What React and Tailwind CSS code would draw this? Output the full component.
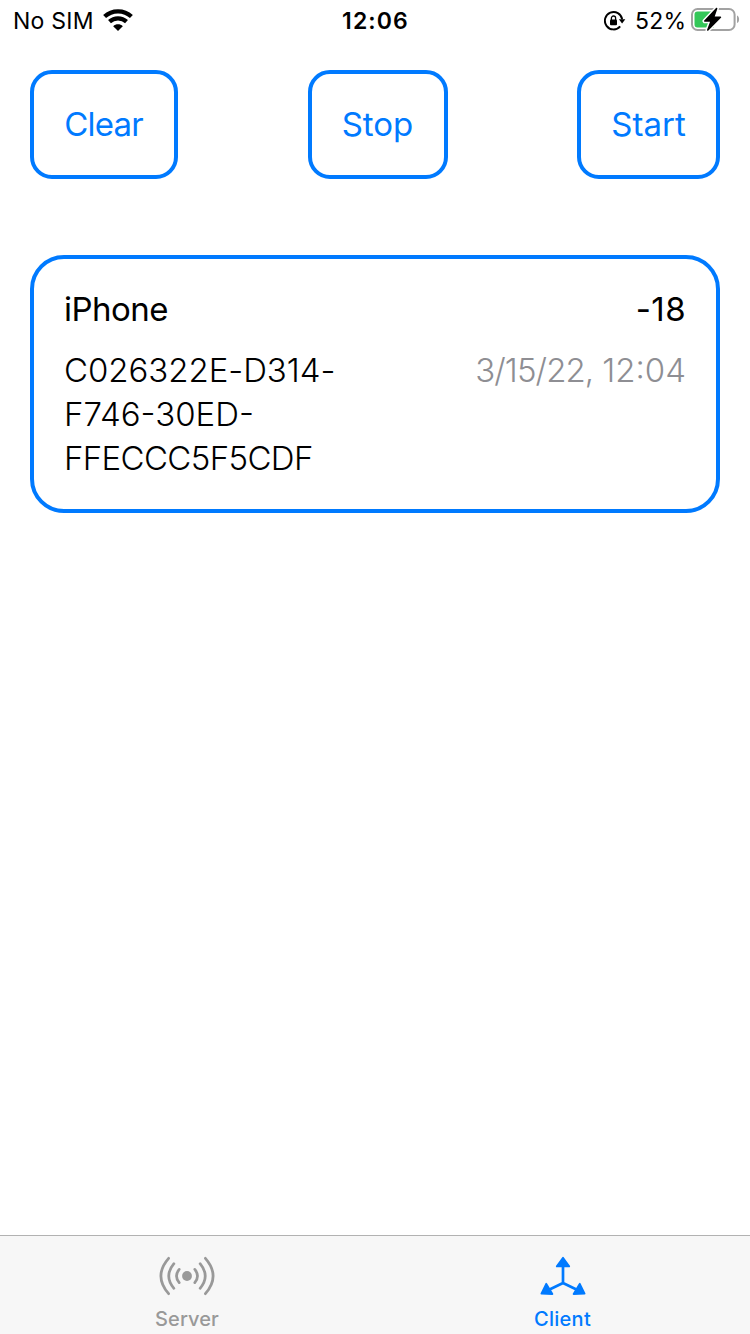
const Wifi = () => (
  <svg width="30" height="22" viewBox="0 0 30 22" fill="none" stroke="#000">
    <path d="M1.6 7.6C9 .5 21 .5 28.4 7.6" strokeWidth="4.2" />
    <path d="M6.5 12.6C11.2 8.2 18.8 8.2 23.5 12.6" strokeWidth="4.2" />
    <path d="M10.2 17.2C12.8 14.7 17.2 14.7 19.8 17.2L15 22Z" fill="#000" stroke="none" />
  </svg>
);

const RotationLock = () => (
  <svg width="22" height="20" viewBox="0 0 22 20" fill="none">
    <path d="M16.2 15.4A8.7 8.7 0 1 1 18.2 8.4" stroke="#000" strokeWidth="1.9" />
    <path d="M14.9 8.2H21.3L18.1 12.6Z" fill="#000" />
    <rect x="6" y="8.4" width="7" height="5.8" rx="1" fill="#000" />
    <path d="M7.4 9V7.1a2.1 2.1 0 0 1 4.2 0V9" stroke="#000" strokeWidth="1.3" />
  </svg>
);

const Battery = () => (
  <svg width="49" height="26" viewBox="0 0 49 26" fill="none">
    <rect x="1" y="3" width="42.6" height="21" rx="5.6" stroke="#a2a2a2" strokeWidth="2" />
    <path d="M46 9.5c2.8 1 2.8 6.6 0 7.6Z" fill="#a2a2a2" />
    <path d="M6.5 5.4H23V21.6H6.5a3 3 0 0 1-3-3V8.4a3 3 0 0 1 3-3Z" fill="#34c759" />
    <path
      d="M25.6 2.6 13.8 15H20.2L16.8 24 29.4 11.3H22.6Z"
      fill="#000"
      stroke="#fff"
      strokeWidth="4.6"
      strokeLinejoin="round"
    />
    <path d="M25.6 2.6 13.8 15H20.2L16.8 24 29.4 11.3H22.6Z" fill="#000" stroke="#000" strokeWidth="1.6" strokeLinejoin="round" />
  </svg>
);

const Broadcast = () => (
  <svg width="56" height="40" viewBox="0 0 56 40" fill="none" stroke="#999" strokeWidth="2.7" strokeLinecap="round">
    <circle cx="28" cy="20" r="4.9" fill="#999" stroke="none" />
    <path d="M20.2 13.4Q14.8 20 20.2 26.6M35.8 13.4Q41.2 20 35.8 26.6" />
    <path d="M14.9 7.7Q4.6 20 14.9 32.3M41.1 7.7Q51.4 20 41.1 32.3" />
    <path d="M9.6 2.3Q-5.8 20 9.6 37.7M46.4 2.3Q61.8 20 46.4 37.7" />
  </svg>
);

const Axes = () => (
  <svg width="46" height="40" viewBox="0 0 46 40" fill="#007aff" stroke="#007aff" strokeLinejoin="round">
    <path d="M23 8V27L8 34.2M23 27L38 34.2" fill="none" strokeWidth="2.7" />
    <path d="M23 1.8 29.2 10.4H16.8Z" strokeWidth="1.8" />
    <path d="M6.2 27.8 12.4 38 1.4 37.6Z" strokeWidth="1.8" />
    <path d="M39.8 27.8 33.6 38 44.6 37.6Z" strokeWidth="1.8" />
  </svg>
);

const ActionButton = ({ className, children }) => (
  <button className={`flex h-[109px] items-center justify-center rounded-[22px] border-4 border-[#007aff] pb-[2px] text-[33px] leading-[44px] text-[#007aff] ${className}`}>
    {children}
  </button>
);

export default function App() {
  return (
    <div className="flex h-[1334px] w-[750px] flex-col bg-white font-['Inter','Liberation_Sans',sans-serif] text-black">
      <header className="grid h-10 grid-cols-3 text-[23px] leading-[42px]">
        <div className="flex pl-[13px]">
          <span className="w-[90px] whitespace-nowrap tracking-[0.25px]">No SIM</span>
          <span className="pt-[9px]"><Wifi /></span>
        </div>
        <div className="pl-px text-center font-semibold tracking-[1.1px]">12:06</div>
        <div className="flex justify-end pr-[10px]">
          <span className="w-[31px] pt-[11px]"><RotationLock /></span>
          <span className="w-[56px] whitespace-nowrap tracking-[0.3px]">52%</span>
          <span className="pt-[6px]"><Battery /></span>
        </div>
      </header>

      <main className="flex flex-1 flex-col px-[30px] pt-[30px]">
        <div className="flex justify-between">
          <ActionButton className="w-[148px] pr-px tracking-[-0.8px]">Clear</ActionButton>
          <ActionButton className="w-[140px]">Stop</ActionButton>
          <ActionButton className="w-[143px]">Start</ActionButton>
        </div>

        <section className="mt-[76px] flex h-[258px] flex-col rounded-[34px] border-4 border-[#007aff] px-[30px] pt-[28px] text-[33px] leading-[44px]">
          <div className="flex justify-between">
            <span className="tracking-[-0.5px]">iPhone</span>
            <span className="tracking-[0.4px]">-18</span>
          </div>
          <div className="mt-[17px] flex justify-between whitespace-nowrap font-light">
            <div>
              <div className="tracking-[-0.05px]">C026322E-D314-</div>
              <div>F746-30ED-</div>
              <div className="tracking-[-0.63px]">FFECCC5F5CDF</div>
            </div>
            <div className="flex gap-[9px] text-[#8e8e93]">
              <span className="tracking-[-0.9px]">3/15/22,</span>
              <span>12:04</span>
            </div>
          </div>
        </section>
      </main>

      <nav className="grid h-[99px] grid-cols-2 border-t border-[#b2b2b2] bg-[#f7f7f7] text-[20px] font-medium leading-[24px]">
        <div className="flex flex-col items-center pr-[2px] pt-[20px] text-[#999]">
          <Broadcast />
          <span className="mt-[11px] pl-px tracking-[0.1px]">Server</span>
        </div>
        <div className="flex flex-col items-center pt-[20px] text-[#007aff]">
          <Axes />
          <span className="mt-[11px] tracking-[0.3px]">Client</span>
        </div>
      </nav>
    </div>
  );
}
